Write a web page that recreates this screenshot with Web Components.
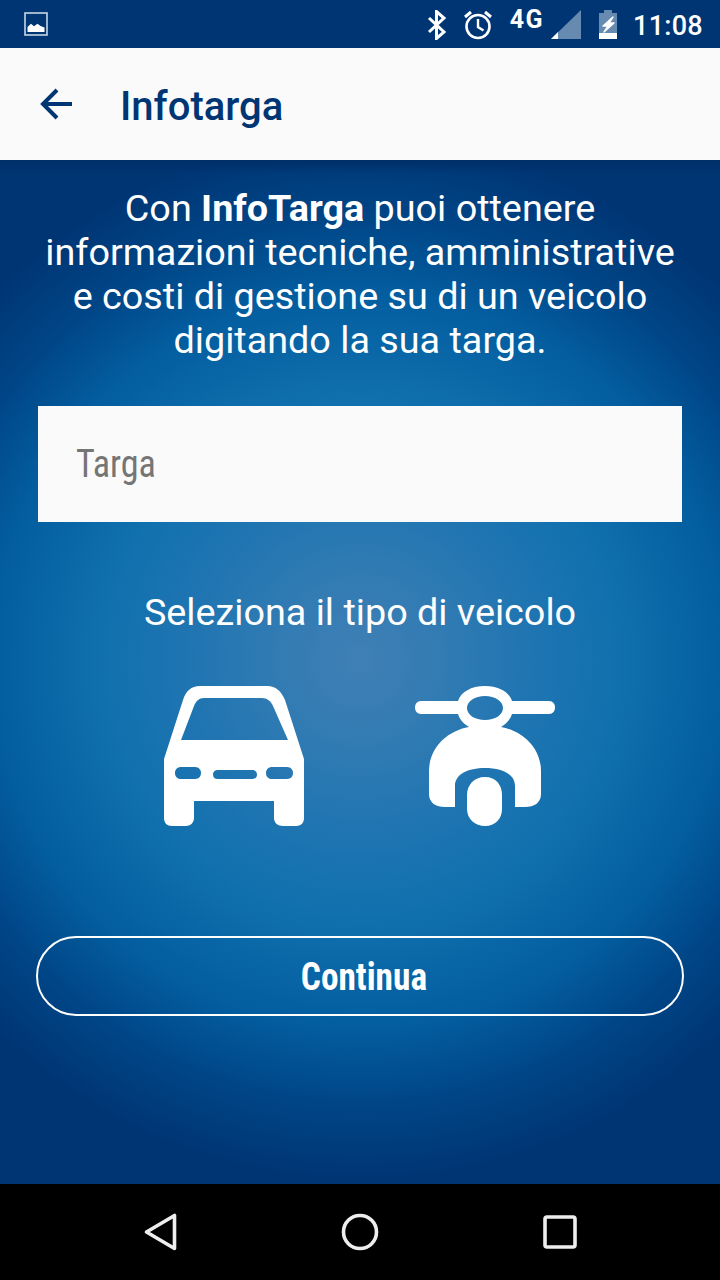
<!DOCTYPE html>
<html lang="it"><head><meta charset="utf-8">
<style>
html,body{margin:0;padding:0;background:#000}
body{width:720px;height:1280px;overflow:hidden;font-family:Roboto,sans-serif}
</style></head><body>
<app-shell>
  <status-bar></status-bar>
  <app-bar>Infotarga</app-bar>
  <main-panel>
    <intro-text>Con <b>InfoTarga</b> puoi ottenere<br>informazioni tecniche, amministrative<br>e costi di gestione su di un veicolo<br>digitando la sua targa.</intro-text>
    <plate-field placeholder="Targa"></plate-field>
    <vehicle-picker label="Seleziona il tipo di veicolo"></vehicle-picker>
    <pill-button>Continua</pill-button>
  </main-panel>
  <nav-bar></nav-bar>
</app-shell>
<script>
function def(name, css, html){
  customElements.define(name, class extends HTMLElement{
    constructor(){super();
      const r=this.attachShadow({mode:'open'});
      const a=n=>this.getAttribute(n)||'';
      r.innerHTML='<style>'+css+'</style>'+(typeof html==='function'?html(a):html);
    }
  });
}
def('app-shell',':host{display:flex;flex-direction:column;width:720px;height:1280px}','<slot></slot>');
def('status-bar',`
:host{display:flex;align-items:center;height:48px;background:#003574;color:#fff;flex:none;padding:0 17px 0 24px;box-sizing:border-box}
svg{display:block;flex:none}
.sp{flex:1}
.g{font:700 25px/24px Roboto,sans-serif;margin:-8px 0 0 0;letter-spacing:1.4px}
.t{font:500 27px/48px Roboto,sans-serif;letter-spacing:.3px;margin-top:3px}
`,`
<svg width="24" height="24" viewBox="0 0 24 24"><rect x="1" y="1" width="22" height="22" fill="none" stroke="#c5d6e6" stroke-width="1.6"/><path d="M3.500 20v-5l3.500-3.200 3 2.400 3.500-2.400 3 2.200 4 1.600V20z" fill="#fff"/></svg>
<span class="sp"></span>
<svg width="24" height="30" viewBox="0 0 24 30" style="margin-right:13px;margin-top:2px"><path d="M3 8l15 14-7.500 6.500V1.500L18 8 3 22" fill="none" stroke="#fff" stroke-width="3"/></svg>
<svg width="30" height="32" viewBox="0 0 30 32" style="margin-right:17px;margin-top:2px"><circle cx="15" cy="17.500" r="11.500" fill="none" stroke="#fff" stroke-width="2.600"/><path d="M15 10V18l5.500 3.500" fill="none" stroke="#fff" stroke-width="2.400"/><path d="M2 8l6-5M28 8l-6-5" stroke="#fff" stroke-width="3"/></svg>
<span class="g">4G</span>
<svg width="31" height="30" viewBox="0 0 31 30" style="margin:1px 16px 0 7px"><path d="M0 29L30 0v29z" fill="#668ab0"/><path d="M0 29l7-7v7z" fill="#fff"/></svg>
<svg width="20" height="30" viewBox="0 0 20 30" style="margin-right:15px;margin-top:1px"><path d="M6 0h8v3h5v26H1V3h5z" fill="#668ab0"/><path d="M1 23h18v6H1z" fill="#fff"/><path d="M15 7L5 16h5L6 22l10-9h-5l4-6z" fill="#fff" stroke="#fff" stroke-width="1.400" stroke-linejoin="round"/></svg>
<span class="t">11:08</span>`);
def('app-bar',`
:host{display:flex;align-items:center;height:112px;background:#fafafa;flex:none;box-sizing:border-box;padding-left:40px;color:#003574;position:relative;z-index:1}
svg{display:block;margin-right:47px;flex:none}
.t{font:500 40px/112px Roboto,sans-serif;margin-top:6px}
`,`<svg width="33" height="32" viewBox="0 0 33 32"><path d="M32 16H3M17 2L3 16l14 14" fill="none" stroke="#003574" stroke-width="4"/></svg><span class="t"><slot></slot></span>`);
def('main-panel',`
:host{display:flex;flex-direction:column;align-items:center;flex:1;box-sizing:border-box;padding-top:26px;background:linear-gradient(#002f68 0,rgba(0,47,104,0) 14px),radial-gradient(circle 520px at 360px 500px,#4080b5 0,#2f7ab3 19%,#2276b2 30%,#1070ae 50%,#035d9f 71%,#004687 85%,#003574 100%)}
`,'<slot></slot>');
def('intro-text',`
:host{display:block;width:720px;text-align:center;color:#fff;font:400 37.75px/44px Roboto,sans-serif;flex:none}
::slotted(b){font-weight:700}
`,'<slot></slot>');
def('plate-field',`
:host{display:flex;align-items:center;width:644px;height:116px;margin-top:44px;background:#fafafa;box-sizing:border-box;padding:0 38px;flex:none}
span{font:400 38px/1 "Liberation Sans Narrow","Roboto Condensed",Roboto,sans-serif;color:#757575;display:block;transform:scaleX(.95);transform-origin:left center}
`,a=>`<span>${a('placeholder')}</span>`);
def('vehicle-picker',`
:host{display:flex;flex-direction:column;align-items:center;width:720px;margin-top:68px;flex:none}
.l{font:400 37.75px/44px Roboto,sans-serif;color:#fff}
.r{display:flex;gap:111px;margin:52px 2px 0 0}
svg{display:block}
`,a=>`<div class="l">${a('label')}</div><div class="r">
<svg width="140" height="140" viewBox="0 0 140 140"><path fill="#fff" fill-rule="evenodd" d="M36 0h67c9 0 14 5 18 14l19 59v59c0 5-3 8-8 8h-13c-5 0-9-3-9-8v-17H30v17c0 5-4 8-8 8H8c-5 0-8-3-8-8V73L19 14C22 5 27 0 36 0zM40 12c-5 0-8 3-10 8L17 54h107l-15-34c-2-5-6-8-11-8zM11 87c0 4 3 6 6 6h14c4 0 6-3 6-6s-2-6-6-6H17c-3 0-6 2-6 6zM49 88.500c0 3 2 4.500 4.500 4.500h35c3 0 4.500-2 4.500-4.500S91 84 88.500 84h-35C51 84 49 85.500 49 88.500zM102 87c0 4 3 6 6 6h15c4 0 6-3 6-6s-2-6-6-6h-15c-3 0-6 2-6 6z"/></svg>
<svg width="140" height="140" viewBox="0 0 140 140"><path fill="#fff" fill-rule="evenodd" d="M70 0C84 0 94 6 97 15h37c4 0 6 3 6 6.500s-2 6.500-6 6.500H97c-2 6-6 10-11 13 23 4 40 22 40 44v23c0 9-7 13-16 13h-10V100C100 88 87 82 70 82s-30 6-30 18v21H30c-9 0-16-4-16-13V85c0-22 17-40 40-44-5-3-9-7-11-13H6c-4 0-6-3-6-6.500S2 15 6 15h37C46 6 56 0 70 0zM70 10c-10 0-18 5-18 12s8 12 18 12 18-5 18-12-8-12-18-12z"/><path fill="#fff" d="M70 91c11 0 17 8 17 18v14c0 10-7 17-17 17s-18-7-18-17v-14c0-10 7-18 18-18z"/></svg>
</div>`);
def('pill-button',`
:host{display:flex;align-items:center;justify-content:center;width:648px;height:80px;margin-top:110px;border:2px solid #fff;border-radius:40px;box-sizing:border-box;color:#fff;flex:none}
span{font:700 38px/1 "Liberation Sans Narrow","Roboto Condensed",Roboto,sans-serif;margin-left:8px;transform:scaleX(.93);display:block;padding-top:2px}
`,'<span><slot></slot></span>');
def('nav-bar',`
:host{display:flex;align-items:center;justify-content:center;gap:144px;height:96px;background:#000;flex:none}
svg{display:block}
`,`
<svg width="56" height="56" viewBox="0 0 56 56"><path d="M42.500 11.500v33L14.500 28z" fill="none" stroke="#eee" stroke-width="3.600" stroke-linejoin="round"/></svg>
<svg width="56" height="56" viewBox="0 0 56 56"><circle cx="28" cy="28" r="16.500" fill="none" stroke="#eee" stroke-width="3.600"/></svg>
<svg width="56" height="56" viewBox="0 0 56 56"><rect x="13" y="13" width="30" height="30" rx="2" fill="none" stroke="#eee" stroke-width="3.600"/></svg>`);
</script>
</body></html>
